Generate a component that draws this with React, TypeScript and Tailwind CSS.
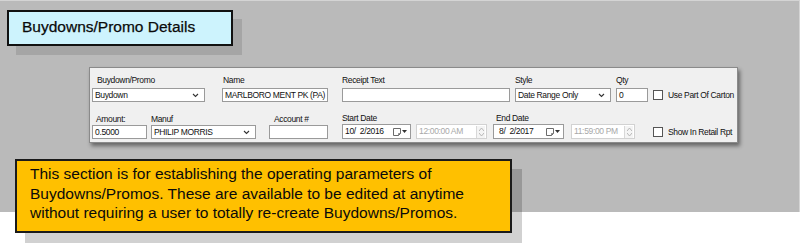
import React from 'react';

// Small combo-box chevron
const Chevron = () => (
  <svg width="7" height="5" viewBox="0 0 7 5" className="shrink-0">
    <path d="M1 1 L3.5 3.5 L6 1" fill="none" stroke="#333" strokeWidth="1.1" />
  </svg>
);

// Calendar glyph + dropdown arrow used by the date pickers
const CalendarDrop = () => (
  <div className="flex items-center gap-[1px] shrink-0">
    <svg width="8" height="8" viewBox="0 0 8 8">
      <path d="M0.5 0.5 H7.5 V5.5 L5.5 7.5 H0.5 Z" fill="#fff" stroke="#6b6b6b" strokeWidth="1" />
      <path d="M5.5 7.5 V5.5 H7.5" fill="none" stroke="#6b6b6b" strokeWidth="0.8" />
    </svg>
    <svg width="5" height="3" viewBox="0 0 5 3">
      <path d="M0 0 H5 L2.5 3 Z" fill="#333" />
    </svg>
  </div>
);

const Spinner = () => (
  <div className="flex flex-col w-[9px] h-[12px] border-l border-[#d8d8d8] bg-[#f4f4f4] items-center justify-center gap-[2px]">
    <svg width="5" height="3" viewBox="0 0 5 3">
      <path d="M0 3 L2.5 0 L5 3" fill="none" stroke="#b0b0b0" strokeWidth="0.9" />
    </svg>
    <svg width="5" height="3" viewBox="0 0 5 3">
      <path d="M0 0 L2.5 3 L5 0" fill="none" stroke="#b0b0b0" strokeWidth="0.9" />
    </svg>
  </div>
);

const Label = ({ children, className = '' }: { children: React.ReactNode; className?: string }) => (
  <div className={`h-[10px] leading-[10px] text-[8.5px] tracking-[-0.35px] text-[#111] whitespace-nowrap ${className}`}>{children}</div>
);

const TextBox = ({ value = '', className = '' }: { value?: string; className?: string }) => (
  <div className={`h-[14px] bg-white border border-[#9a9a9a] px-[2px] flex items-center text-[8.5px] tracking-[-0.35px] text-[#111] whitespace-pre overflow-hidden ${className}`}>
    {value}
  </div>
);

const Combo = ({ value, className = '' }: { value: string; className?: string }) => (
  <div className={`h-[14px] bg-white border border-[#9a9a9a] pl-[2px] pr-[5px] flex items-center justify-between text-[8.5px] tracking-[-0.35px] text-[#111] whitespace-nowrap ${className}`}>
    <span>{value}</span>
    <Chevron />
  </div>
);

const DateBox = ({ value, className = '' }: { value: string; className?: string }) => (
  <div className={`h-[15px] bg-white border border-[#9a9a9a] pl-[2px] pr-[3px] flex items-center justify-between text-[8.5px] tracking-[-0.35px] text-[#111] whitespace-pre ${className}`}>
    <span>{value}</span>
    <CalendarDrop />
  </div>
);

const TimeBox = ({ value, className = '' }: { value: string; className?: string }) => (
  <div className={`h-[15px] bg-white border border-[#d2d2d2] pl-[2px] pr-[1px] flex items-center justify-between text-[8.5px] tracking-[-0.35px] text-[#a8a8a8] whitespace-nowrap ${className}`}>
    <span>{value}</span>
    <Spinner />
  </div>
);

const Check = ({ label }: { label: string }) => (
  <div className="flex items-center gap-[5px] h-[14px]">
    <div className="w-[10px] h-[10px] bg-white border border-[#555]" />
    <span className="text-[8.5px] tracking-[-0.35px] text-[#111] whitespace-nowrap">{label}</span>
  </div>
);

export default function App() {
  return (
    <div className="w-[800px] h-[244px] bg-white overflow-hidden font-['Liberation_Sans',Arial,sans-serif]">
      <div className="h-[212px] bg-[#bababa] border-t border-r border-[#d4d4d4] pt-[9px]">
        {/* Title badge */}
        <div className="ml-[7px] w-[226px] h-[36px] border-2 border-[#111] bg-[#cdf3fd] flex items-center pl-[13px] pb-[2px] shadow-[9px_9px_0_rgba(0,0,0,0.11)]">
          <span className="text-[15.5px] text-[#0a0a0a] [-webkit-text-stroke:0.25px_#0a0a0a]">Buydowns/Promo Details</span>
        </div>

        {/* Form panel */}
        <div className="mt-[21px] ml-[89px] w-[649px] h-[76px] bg-[#f0f0f0] border border-[#8a8a8a] shadow-[2px_3px_4px_rgba(0,0,0,0.45)] pt-[7px] pl-[2px] flex flex-col">
          <div className="flex items-end">
            <div className="flex flex-col w-[113px]">
              <Label className="ml-[5px]">Buydown/Promo</Label>
              <Combo value="Buydown" className="mt-[3px]" />
            </div>
            <div className="flex flex-col w-[106px] ml-[17px]">
              <Label className="ml-[1px]">Name</Label>
              <TextBox value="MARLBORO MENT PK (PA)" className="mt-[3px]" />
            </div>
            <div className="flex flex-col w-[168px] ml-[14px]">
              <Label>Receipt Text</Label>
              <TextBox className="mt-[3px]" />
            </div>
            <div className="flex flex-col w-[96px] ml-[5px]">
              <Label>Style</Label>
              <Combo value="Date Range Only" className="mt-[3px]" />
            </div>
            <div className="flex flex-col w-[32px] ml-[5px]">
              <Label>Qty</Label>
              <TextBox value="0" className="mt-[3px]" />
            </div>
            <div className="ml-[5px]">
              <Check label="Use Part Of Carton" />
            </div>
          </div>

          <div className="flex items-end mt-[11px]">
            <div className="flex flex-col w-[55px]">
              <Label className="ml-[4px]">Amount:</Label>
              <TextBox value="0.5000" className="mt-[1px]" />
            </div>
            <div className="flex flex-col w-[105px] ml-[4px]">
              <Label className="-mb-[2px]">Manuf</Label>
              <Combo value="PHILIP MORRIS" className="mt-[3px]" />
            </div>
            <div className="flex flex-col w-[59px] ml-[13px]">
              <Label className="ml-[5px]">Account #</Label>
              <TextBox className="mt-[1px]" />
            </div>
            <div className="flex flex-col w-[69px] ml-[14px]">
              <Label>Start Date</Label>
              <DateBox value="10/  2/2016" className="mt-[1px]" />
            </div>
            <div className="w-[71px] ml-[5px]">
              <TimeBox value="12:00:00 AM" />
            </div>
            <div className="flex flex-col w-[71px] ml-[6px]">
              <Label className="ml-[3px]">End Date</Label>
              <DateBox value="8/  2/2017" className="mt-[1px] pl-[5px]" />
            </div>
            <div className="w-[64px] ml-[7px]">
              <TimeBox value="11:59:00 PM" />
            </div>
            <div className="ml-[18px]">
              <Check label="Show In Retail Rpt" />
            </div>
          </div>
        </div>

        {/* Callout */}
        <div className="mt-[16px] ml-[15px] w-[497px] h-[74px] bg-[#ffc000] border-2 border-[#1a1a1a] pl-[13px] pt-[3px] shadow-[10px_10px_0_rgba(0,0,0,0.18)]">
          <p className="text-[15.5px] leading-[19.5px] text-[#0a0a0a]">
            This section is for establishing the operating parameters of Buydowns/Promos. These are available to be edited at anytime without requiring a user to totally re-create Buydowns/Promos.
          </p>
        </div>
      </div>
    </div>
  );
}
